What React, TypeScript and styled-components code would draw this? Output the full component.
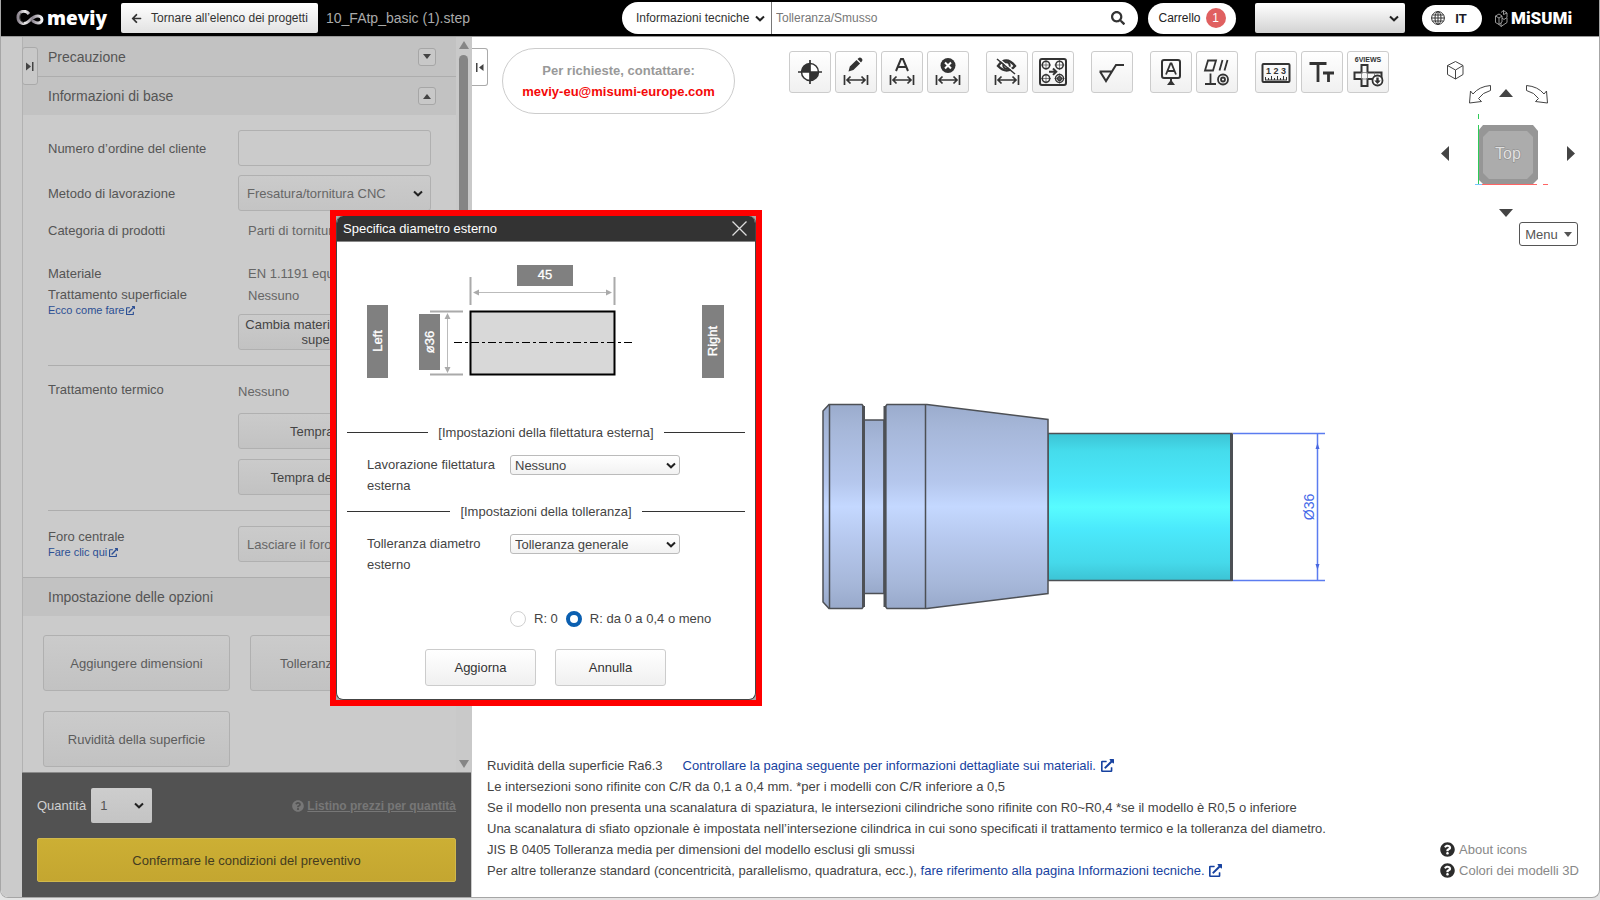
import React from 'react';
import styled, { createGlobalStyle, css } from 'styled-components';
import { FaQuestionCircle, FaSearch, FaArrowLeft, FaExternalLinkAlt } from 'react-icons/fa';

const GlobalStyle = createGlobalStyle`
  *, *::before, *::after { box-sizing: border-box; }
  body { margin: 0; background: #e4e4e4; }
  body, button, input, select {
    font-family: "Liberation Sans", Arial, sans-serif;
    font-size: 13px;
  }
  button { cursor: pointer; padding: 0; }
  a { text-decoration: none; }
`;

const chevron = `url("data:image/svg+xml,%3Csvg xmlns='http://www.w3.org/2000/svg' width='10' height='7'%3E%3Cpath d='M1 1.500L5 5.300 9 1.500' fill='none' stroke='%23222' stroke-width='2'/%3E%3C/svg%3E")`;

const Window = styled.div`
  position: relative;
  display: flex;
  flex-direction: column;
  height: calc(100vh - 2px);
  min-height: 860px;
  background: #fff;
  border: 1px solid #a6a6a6;
  border-top: 0;
  border-radius: 0 0 8px 8px;
  overflow: hidden;
`;

/* ---------- header ---------- */

const Header = styled.header`
  display: flex;
  align-items: center;
  flex: none;
  height: 37px;
  padding: 0 28px 0 15px;
  background: #000;
  border-bottom: 1px solid #999;
`;

const Brand = styled.a`
  display: flex;
  align-items: center;
  gap: 3px;
  width: 105px;
  color: #fff;
  font: 800 19px/28px "Open Sans", sans-serif;
  svg { flex: none; }
`;

const BackButton = styled.button`
  display: flex;
  align-items: center;
  justify-content: center;
  gap: 9px;
  width: 197px;
  height: 30px;
  border: 0;
  border-radius: 2px;
  background: linear-gradient(#fff, #e2e2e2);
  color: #333;
  font-size: 12px;
`;

const FileName = styled.span`
  margin-left: 8px;
  color: #aaa;
  font-size: 14px;
  white-space: nowrap;
`;

const SearchBar = styled.form`
  display: flex;
  align-items: center;
  width: 516px;
  height: 32px;
  margin-left: auto;
  padding: 0 13px 0 14px;
  border-radius: 16px;
  background: #fff;
`;

const SearchScope = styled.select`
  appearance: none;
  width: 136px;
  height: 32px;
  padding: 0;
  border: 0;
  border-right: 1px solid #777;
  background: ${chevron} no-repeat right 6px center;
  color: #333;
  font-size: 12px;
`;

const SearchInput = styled.input`
  flex: 1;
  min-width: 0;
  height: 28px;
  padding: 0 4px;
  border: 0;
  outline: 0;
  color: #333;
  font-size: 12px;
  &::placeholder { color: #777; opacity: 1; }
`;

const SearchButton = styled.button`
  display: flex;
  border: 0;
  background: none;
  color: #333;
  font-size: 14px;
`;

const CartButton = styled.button`
  display: flex;
  align-items: center;
  justify-content: center;
  gap: 5px;
  width: 88px;
  height: 31px;
  margin-left: 10px;
  border: 0;
  border-radius: 16px;
  background: #fff;
  color: #222;
  font-size: 12px;
`;

const CartCount = styled.span`
  width: 20px;
  height: 20px;
  border-radius: 10px;
  background: #e06060;
  color: #fff;
  line-height: 20px;
`;

const AccountSelect = styled.select`
  appearance: none;
  width: 150px;
  height: 30px;
  margin-left: 19px;
  padding: 0 4px;
  border: 0;
  border-radius: 2px;
  background: ${chevron} no-repeat right 6px center, linear-gradient(#fff, #d2d2d2);
`;

const LanguageButton = styled.button`
  display: flex;
  align-items: center;
  justify-content: center;
  gap: 10px;
  width: 60px;
  height: 27px;
  margin-left: 17px;
  padding-right: 6px;
  border: 0;
  border-radius: 14px;
  background: #fff;
  color: #1c1c28;
  font-weight: bold;
`;

const Misumi = styled.a`
  display: flex;
  align-items: center;
  gap: 3px;
  width: 76px;
  margin-left: 13px;
  color: #fff;
  font: 900 17px/24px "Roboto", sans-serif;
  svg { flex: none; }
`;

/* ---------- side panel ---------- */

const Body = styled.div`
  display: flex;
  flex: 1;
  min-height: 0;
`;

const Rail = styled.div`
  flex: none;
  width: 21px;
  background: #cbcbcb;
`;

const Panel = styled.aside`
  position: relative;
  display: flex;
  flex-direction: column;
  flex: none;
  width: 450px;
  background: #cbcbcb;
  color: #555;
`;

const edgeTab = css`
  display: flex;
  align-items: center;
  justify-content: center;
  width: 16px;
  height: 38px;
  border: 1px solid #aaa;
  color: #444;
`;

const PanelTab = styled.button`
  ${edgeTab}
  position: absolute;
  z-index: 1;
  top: 10px;
  left: 0;
  border-radius: 3px;
  background: #c8c8c8;
`;

const PanelScroll = styled.div`
  display: flex;
  flex: 1;
  min-height: 0;
  overflow: hidden;
  border-left: 1px solid #b2b2b2;
`;

const Sections = styled.div`
  flex: 1;
  min-width: 0;
`;

const ScrollTrack = styled.div`
  display: flex;
  flex-direction: column;
  align-items: center;
  gap: 6px;
  width: 16px;
  padding: 4px 1px 4px 0;
  background: #c9c9c9;
`;

const ScrollThumb = styled.div`
  width: 9px;
  height: 570px;
  border-radius: 5px;
  background: #858585;
`;

const ScrollArrow = styled.div<{ $down?: boolean }>`
  width: 0;
  height: 0;
  margin-top: ${p => (p.$down ? 'auto' : '0')};
  border: 5px solid transparent;
  border-top: ${p => (p.$down ? '8px solid #858585' : '0')};
  border-bottom: ${p => (p.$down ? '0' : '8px solid #858585')};
`;

const SectionHeader = styled.h2<{ $ruled?: boolean }>`
  display: flex;
  align-items: center;
  justify-content: space-between;
  height: 39px;
  margin: 0;
  padding: 0 20px 0 25px;
  border-top: ${p => (p.$ruled ? '1px solid #adadad' : '0')};
  background: #c2c2c2;
  font-size: 14px;
  font-weight: normal;
`;

const Toggle = styled.button`
  display: flex;
  align-items: center;
  justify-content: center;
  width: 18px;
  height: 18px;
  border: 1px solid #a6a6a6;
  border-radius: 3px;
  background: #c8c8c8;
  color: #444;
`;

const Fields = styled.div`
  padding: 15px 25px;
`;

const Field = styled.div<{ $gap?: number; $middle?: boolean }>`
  display: grid;
  grid-template-columns: 190px 1fr;
  align-items: ${p => (p.$middle ? 'center' : 'start')};
  margin-top: ${p => p.$gap ?? 0}px;
  line-height: 21px;
`;

const Rule = styled.hr`
  height: 1px;
  margin: 15px 0 0;
  border: 0;
  background: #adadad;
`;

const SmallLink = styled.a`
  display: flex;
  align-items: center;
  gap: 2px;
  color: #2c4f94;
  font-size: 11px;
  line-height: 11px;
`;

const Value = styled.div<{ $inset?: boolean }>`
  padding: ${p => (p.$inset ? '0 0 0 10px' : '2px 0 0')};
  color: #666;
  line-height: 22px;
`;

const Stack = styled.div<{ $gap: number }>`
  display: flex;
  flex-direction: column;
  gap: ${p => p.$gap}px;
`;

const panelControl = css`
  width: 100%;
  height: 36px;
  border: 1px solid #b0b0b0;
  border-radius: 3px;
`;

const TextInput = styled.input`
  ${panelControl}
  background: #cbcbcb;
`;

const PanelSelect = styled.select`
  ${panelControl}
  appearance: none;
  padding: 0 8px;
  background: ${chevron} no-repeat right 7px center, linear-gradient(#cbcbcb, #c4c4c4);
  color: #666;
`;

const PanelButton = styled.button`
  ${panelControl}
  background: linear-gradient(#cbcbcb, #c2c2c2);
  color: #444;
  line-height: 15px;
  white-space: nowrap;
`;

const Options = styled.div`
  display: grid;
  grid-template-columns: 187px 187px;
  gap: 20px;
  padding: 19px 20px;
`;

const OptionButton = styled(PanelButton)`
  height: 56px;
  color: #5c5c5c;
`;

const PanelFooter = styled.footer`
  flex: none;
  margin-right: 1px;
  padding: 15px;
  border-top: 1px solid #8a8a8a;
  background: #525252;
`;

const QuantityRow = styled.div`
  display: flex;
  align-items: center;
  margin-bottom: 15px;
  color: #d0d0d0;
`;

const QuantitySelect = styled.select`
  appearance: none;
  width: 61px;
  height: 35px;
  margin-left: 5px;
  padding: 0 9px;
  border: 0;
  border-radius: 2px;
  background: ${chevron} no-repeat right 8px center, linear-gradient(#cdcdcd, #c4c4c4);
  color: #555;
`;

const PriceLink = styled.a`
  display: flex;
  align-items: center;
  gap: 3px;
  margin-left: auto;
  color: #777;
  font-size: 12px;
  font-weight: bold;
  span { text-decoration: underline; }
`;

const ConfirmButton = styled.button`
  width: 100%;
  height: 44px;
  border: 1px solid #d0b84c;
  border-radius: 2px;
  background: linear-gradient(#ccaf34, #c4a630);
  color: #443c20;
`;

/* ---------- viewer ---------- */

const Viewer = styled.main`
  display: flex;
  flex: 1;
  flex-direction: column;
  min-width: 0;
`;

const ViewerTop = styled.div`
  display: flex;
  align-items: flex-start;
  padding: 11px 21px 0 0;
`;

const ViewerTab = styled.button`
  ${edgeTab}
  border-left: 0;
  border-radius: 0 3px 3px 0;
  background: #fff;
`;

const Contact = styled.div`
  width: 233px;
  height: 66px;
  margin-left: 14px;
  padding-top: 11px;
  border: 1px solid #ccc;
  border-radius: 33px;
  color: #999;
  font-weight: bold;
  line-height: 21px;
  text-align: center;
  a { color: #f40808; }
`;

const Toolbar = styled.div`
  display: flex;
  gap: 17px;
  margin: 3px 0 0 54px;
`;

const ToolGroup = styled.div`
  display: flex;
  gap: 4px;
`;

const ToolButton = styled.button`
  width: 42px;
  height: 42px;
  border: 1px solid #ccc;
  border-radius: 3px;
  background: linear-gradient(#fff, #f0f0f0);
  svg { display: block; margin: -1px; }
`;

const Navigator = styled.div`
  display: flex;
  flex-direction: column;
  align-items: flex-end;
  margin-left: auto;
`;

const MenuButton = styled.button`
  display: flex;
  align-items: center;
  justify-content: center;
  gap: 6px;
  width: 59px;
  height: 24px;
  border: 1px solid #555;
  border-radius: 3px;
  background: #fff;
  color: #555;
`;

const Canvas = styled.div`
  display: flex;
  flex: 1;
  align-items: center;
  justify-content: center;
  min-height: 0;
  padding: 12px 0 0 77px;
`;

const ViewerFooter = styled.footer`
  display: flex;
  align-items: flex-end;
  justify-content: space-between;
  padding: 0 20px 16px 15px;
  line-height: 21px;
`;

const Notes = styled.div`
  color: #444;
  p { margin: 0; }
`;

const NoteLink = styled.a<{ $apart?: boolean }>`
  margin-left: ${p => (p.$apart ? '20px' : '0')};
  color: #1742a0;
  svg { margin-left: 1px; vertical-align: -2px; }
`;

const HelpLinks = styled.nav`
  display: flex;
  flex-direction: column;
  a { display: flex; align-items: center; gap: 4px; color: #888; }
  svg { color: #2c2c2c; }
`;

/* ---------- dialog ---------- */

const DialogFrame = styled.div`
  position: absolute;
  z-index: 2;
  top: 210px;
  left: 329px;
  width: 432px;
  border: 6px solid #f00;
  background: #a8a8a8;
`;

const Dialog = styled.section`
  border: 1px solid #444;
  border-top: 0;
  border-radius: 7px;
  background: #fff;
  color: #444;
  overflow: hidden;
`;

const DialogTitle = styled.h1`
  display: flex;
  align-items: center;
  justify-content: space-between;
  height: 26px;
  margin: 0;
  padding: 0 8px 0 6px;
  border-bottom: 1px solid #888;
  background: #333;
  color: #fff;
  font-size: 13px;
  font-weight: normal;
`;

const CloseButton = styled.button`
  display: flex;
  border: 0;
  background: none;
`;

const DialogBody = styled.form`
  padding: 13px 10px 13px;
  line-height: 21px;
`;

const Drawing = styled.svg`
  display: block;
  width: 100%;
  height: 166px;
`;

const Divider = styled.div`
  display: flex;
  align-items: center;
  gap: 10px;
  height: 22px;
  white-space: nowrap;
  &::before, &::after { content: ""; flex: 1; height: 1px; background: #333; }
`;

const DialogField = styled.div`
  display: grid;
  grid-template-columns: 130px 170px;
  column-gap: 13px;
  align-items: start;
  padding: 11px 20px 4px;
`;

const DialogSelect = styled.select`
  appearance: none;
  height: 20px;
  margin-top: 1px;
  padding: 0 4px;
  border: 1px solid #bbb;
  border-radius: 3px;
  background: ${chevron} no-repeat right 3px center, linear-gradient(#fff, #f2f2f2);
  color: #444;
`;

const Radios = styled.div`
  display: flex;
  gap: 8px;
  padding: 29px 0 20px 163px;
  label { display: flex; align-items: center; gap: 8px; }
`;

const Radio = styled.input`
  appearance: none;
  width: 16px;
  height: 16px;
  margin: 0;
  border: 1px solid #d0d0d0;
  border-radius: 50%;
  background: #fff;
  &:checked { border: 4px solid #0b5fb0; }
`;

const Actions = styled.div`
  display: flex;
  justify-content: center;
  gap: 19px;
  padding-right: 1px;
`;

const ActionButton = styled.button`
  width: 111px;
  height: 37px;
  border: 1px solid #ccc;
  border-radius: 3px;
  background: linear-gradient(#fff, #f0f0f0);
  color: #333;
`;

/* ---------- icons ---------- */

const Caret = ({ up }: { up?: boolean }) => (
  <svg width="8" height="5"><path d={up ? 'M0 5H8L4 0Z' : 'M0 0H8L4 5Z'} fill="currentColor" /></svg>
);

const EdgeArrow = ({ left }: { left?: boolean }) => (
  <svg width="8" height="9">
    {left
      ? <path d="M0 0h1.500v9H0zM7.500 1v7L3 4.500z" fill="currentColor" />
      : <path d="M6 0h1.500v9H6zM0 0.500v8L5 4.500z" fill="currentColor" />}
  </svg>
);

const MeviyMark = () => (
  <svg width="28" height="16" viewBox="0 0 28 16" fill="none">
    <defs>
      <linearGradient id="mark" x1="0" x2="1">
        <stop offset="0" stopColor="#8d8690" /><stop offset=".3" stopColor="#eee" />
        <stop offset=".6" stopColor="#8b8490" /><stop offset="1" stopColor="#f4f4f4" />
      </linearGradient>
    </defs>
    <path d="M13 4C10 0 2 0 2 7.500C2 14 9 15 13 11C17 7 19 6 22 6C27 6 27.500 13 22 13C19 13 18 11.500 16 10.500" stroke="url(#mark)" strokeWidth="3" />
    <path d="M5 3C2.500 7 4 12 8 13" stroke="#555" strokeWidth="1" />
  </svg>
);

const Globe = () => (
  <svg width="14" height="14" viewBox="0 0 14 14" fill="none" stroke="#333">
    <circle cx="7" cy="7" r="6.400" /><ellipse cx="7" cy="7" rx="3" ry="6.400" />
    <path d="M7 .6v12.800M.6 7h12.800M1.500 4h11M1.500 10h11" />
  </svg>
);

const MisumiMark = () => (
  <svg width="13" height="17" viewBox="0 0 13 17" fill="none" stroke="#bbb" strokeWidth=".8">
    <path d="M.5 6L4 4l3 2v6l-3 2.500L.5 12.500zM.5 6L4 8l3-2M4 8v6.500M6 2.500L8.500.5 12 3v4.500L9 9.500 7 8M8.500.5v4L12 3M4 14.500l2 2 6-4V8M6 16.500V13" />
  </svg>
);

const DimArrow = () => (
  <g fill="none" stroke="#333" strokeWidth="1.700">
    <path d="M9.500 24v10M32.500 24v10M12 29h18M15.500 25.500L12 29l3.500 3.500M26.500 25.500L30 29l-3.500 3.500" />
  </g>
);

const icons: Record<string, React.ReactNode> = {
  Origine: (
    <>
      <circle cx="21" cy="21" r="8.500" fill="#fff" stroke="#333" strokeWidth="1.500" />
      <path d="M21 21V12.500A8.500 8.500 0 0 0 12.500 21zM21 21v8.500A8.500 8.500 0 0 0 29.500 21z" fill="#333" />
      <path d="M21 9v24M9 21h24" stroke="#333" strokeWidth="1.700" />
    </>
  ),
  'Modifica quota': (
    <>
      <path d="M13.500 20.500l1.300-5L21.500 9l3.600 3.600-6.700 6.500zM22.500 8l1.600-1.300q1.200-.6 2.200.4l.8.900q.8 1 0 2L26 11.600z" fill="#333" />
      <DimArrow />
    </>
  ),
  'Quota automatica': (<><path d="M15 20L20 8h2l5 12M17 16h8" fill="none" stroke="#333" strokeWidth="2" /><DimArrow /></>),
  'Elimina quota': (
    <>
      <circle cx="21" cy="14.500" r="7.500" fill="#333" />
      <path d="M18 11.500l6 6M24 11.500l-6 6" stroke="#fff" strokeWidth="2" /><DimArrow />
    </>
  ),
  'Nascondi quota': (
    <>
      <path d="M12 15q8-11 17 0-8 9-17 0z" fill="none" stroke="#333" strokeWidth="2.400" />
      <circle cx="20.500" cy="14.500" r="3.200" fill="none" stroke="#333" strokeWidth="2" />
      <path d="M12 7l18 15" stroke="#fff" strokeWidth="1.500" /><path d="M11 8l18 15" stroke="#333" strokeWidth="1.500" />
      <DimArrow />
    </>
  ),
  'Copia fori': (
    <g fill="none" stroke="#333" strokeWidth="1.500">
      <rect x="8" y="8" width="26" height="26" rx="2" strokeWidth="2" />
      <circle cx="14" cy="14" r="3.700" /><circle cx="27.500" cy="14" r="3.700" />
      <circle cx="14" cy="27.500" r="3.700" /><circle cx="27.500" cy="27.500" r="4" /><circle cx="27.500" cy="27.500" r="1.800" />
      <path d="M9 14h10M14 9v10M22.500 14h10M27.500 9v10M9 27.500h10M14 22.500v10M22.500 27.500h10M27.500 22.500v10" strokeWidth=".6" />
      <path d="M17 20.700h7M21 17.500l3.300 3.200-3.300 3.200" strokeWidth="2" />
    </g>
  ),
  Rugosità: (<path d="M8.500 20.500H21M9 20.500l6 9.500L25 14h8" fill="none" stroke="#333" strokeWidth="2" />),
  Riferimento: (
    <>
      <rect x="12" y="9" width="18" height="18" rx="2" fill="none" stroke="#333" strokeWidth="2" />
      <path d="M16 23.500l4.500-11h1l4.500 11M17.500 20h7" fill="none" stroke="#333" strokeWidth="1.800" />
      <path d="M20 27h2v3l3 4h-8l3-4z" fill="#333" />
    </>
  ),
  'Tolleranza di forma': (
    <g fill="none" stroke="#333" strokeWidth="1.800">
      <path d="M9 19.500l3-10h8l-3 10zM23.500 19.500l3-10.500M28.500 19.500l3-10.500M14.500 22.500v11M9 33h11" />
      <circle cx="27" cy="28.500" r="5" /><circle cx="27" cy="28.500" r="2" />
    </g>
  ),
  Misura: (
    <>
      <rect x="7.500" y="13" width="27" height="18" rx="1" fill="none" stroke="#333" strokeWidth="2" />
      <text x="21" y="23" textAnchor="middle" fontSize="9" fontWeight="bold" fill="#333">1 2 3</text>
      <path d="M10.500 26v3M13.500 27v2M16.500 25v4M19.500 27v2M22.500 25v4M25.500 27v2M28.500 25v4M31.500 26v3M10 29h22" stroke="#333" fill="none" />
    </>
  ),
  Testo: (<path d="M8.500 12.500h17M17 12.500V31M22 22h11M27.500 22v9" fill="none" stroke="#333" strokeWidth="2.800" />),
  'Sei viste': (
    <>
      <text x="21" y="11" textAnchor="middle" fontSize="7" fontWeight="bold" fill="#333">6VIEWS</text>
      <path d="M14.500 14h6v7.500h14V28h-14v7h-6v-7h-7v-6.500h7z" fill="none" stroke="#333" strokeWidth="2" />
      <path d="M14.500 21.500h6v6.500h-6zM27.500 21.500v6" fill="none" stroke="#777" strokeWidth=".8" />
      <circle cx="30.500" cy="29.500" r="5" fill="#fff" stroke="#333" strokeWidth="1.800" />
      <path d="M29.300 26.500h2.400v3h2l-3.200 3.500-3.200-3.500h2z" fill="#333" />
    </>
  ),
};

const toolGroups = [
  ['Origine', 'Modifica quota', 'Quota automatica', 'Elimina quota'],
  ['Nascondi quota', 'Copia fori'],
  ['Rugosità'],
  ['Riferimento', 'Tolleranza di forma'],
  ['Misura', 'Testo', 'Sei viste'],
];

const ViewCube = () => (
  <svg width="142" height="174" viewBox="0 0 142 174">
    <g fill="#fff" stroke="#444" strokeWidth="1">
      <path d="M11.500 17.500l8-4 7.500 4v9l-7.500 4.500-8-4.500zM11.500 17.500l8 4.500 7.500-4.500M19.500 22v9" />
      <path d="M54.500 37.500v5q-8 2-12 8l3 3-12 1.500 1-12 2.500 3q6-7.500 17.500-8.500z" />
      <path d="M90.500 37.500v5q8 2 12 8l-3 3 12 1.500-1-12-2.500 3q-6-7.500-17.500-8.500z" />
    </g>
    <path d="M63 49h14l-7-8zM63 161h14l-7 8zM13 98v15l-8-7.500zM131 98v15l8-7.500z" fill="#444" />
    <path d="M47 77h50l5 6v48l-5 5H47l-5-5V83z" fill="#969696" />
    <path d="M53 83h38l6 6v36l-6 6H53l-6-6V89z" fill="#acacac" />
    <text x="72" y="111" textAnchor="middle" fontSize="16" fill="#e0e0e0" stroke="#888" strokeWidth="1" paintOrder="stroke">Top</text>
    <path d="M42.500 66v5M42.500 77v59" stroke="#2ecc57" />
    <path d="M46 136.500h55M107 136.500h5" stroke="#ff6464" />
    <path d="M39 136.500h7" stroke="#7ac4ff" />
  </svg>
);

const PartModel = () => (
  <svg width="506" height="208" viewBox="821 403 506 208">
    <defs>
      <linearGradient id="steel" x2="0" y2="1">
        <stop offset="0" stopColor="#9baccd" /><stop offset=".12" stopColor="#a6b7d9" />
        <stop offset=".38" stopColor="#b5c7ed" /><stop offset=".5" stopColor="#c4d8ff" />
        <stop offset=".64" stopColor="#b8caf0" /><stop offset=".88" stopColor="#a6b7d9" /><stop offset="1" stopColor="#98a9ca" />
      </linearGradient>
      <linearGradient id="selected" x2="0" y2="1">
        <stop offset="0" stopColor="#3cc3d4" /><stop offset=".12" stopColor="#45dcec" />
        <stop offset=".36" stopColor="#4be9fc" /><stop offset=".5" stopColor="#58fcff" />
        <stop offset=".65" stopColor="#4be9fc" /><stop offset=".88" stopColor="#45d9ea" /><stop offset="1" stopColor="#3cc3d4" />
      </linearGradient>
    </defs>
    <g stroke="#4d5055" strokeWidth="1.500">
      <path d="M1048 433.500h184v147h-184z" fill="url(#selected)" />
      <path d="M863 420h21v173.500h-21z" fill="url(#steel)" />
      <path d="M829 404.500h33l1.500 2v200l-1.500 2h-33l-6-6.500V411z" fill="url(#steel)" />
      <path d="M887 404.500h40l121 15v174l-121 15h-40l-1.500-2v-200z" fill="url(#steel)" />
      <path d="M829.500 404v205M925.500 404v205" fill="none" />
      <path d="M863.500 406v201M885 406v201M1231.500 434v147" strokeWidth="3" />
    </g>
    <path d="M1233 433.500h92M1233 580.500h92M1317.500 433v147" stroke="#5b7cf0" strokeWidth="1.500" />
    <path d="M1315.500 449h4l-2-6zM1315.500 564h4l-2 6z" fill="#4a68e0" />
    <text transform="translate(1314 507) rotate(-90)" textAnchor="middle" fontSize="14" fill="#4468e8">Ø36</text>
  </svg>
);

const DiameterDrawing = () => (
  <Drawing viewBox="347 256 398 166">
    <path d="M470.500 278v28M614.500 278v28M430 312.500h33M430 375.500h33" stroke="#aaa" strokeWidth="2" />
    <path d="M475 293.500h135M447.500 318v54" stroke="#bbb" />
    <path d="M473 293.500l6-3v6zM612 293.500l-6-3v6zM447.500 314l-3 6h6zM447.500 374l-3-6h6z" fill="#aaa" />
    <rect x="470.500" y="312.500" width="144" height="63" fill="#d8d8d8" stroke="#000" strokeWidth="2" />
    <path d="M454 343.500h178" stroke="#000" strokeDasharray="8 3 3 3" />
    <g fill="#808080">
      <rect x="517" y="266" width="56" height="21" /><rect x="367" y="306" width="21" height="73" />
      <rect x="419" y="315" width="21" height="56" /><rect x="702" y="306" width="22" height="73" />
    </g>
    <g fill="#fff" stroke="#fff" strokeWidth=".3" fontSize="13" textAnchor="middle">
      <text x="545" y="280">45</text>
      <text transform="translate(382 342) rotate(-90)">Left</text>
      <text transform="translate(434 343) rotate(-90)">ø36</text>
      <text transform="translate(717 342) rotate(-90)">Right</text>
    </g>
  </Drawing>
);

export default function App() {
  return (
    <Window>
      <GlobalStyle />
      <Header>
        <Brand href="#"><MeviyMark />meviy</Brand>
        <BackButton><FaArrowLeft size={11} />Tornare all’elenco dei progetti</BackButton>
        <FileName>10_FAtp_basic (1).step</FileName>
        <SearchBar>
          <SearchScope aria-label="Ambito di ricerca"><option>Informazioni tecniche</option></SearchScope>
          <SearchInput aria-label="Cerca" placeholder="Tolleranza/Smusso" />
          <SearchButton type="button" aria-label="Cerca"><FaSearch /></SearchButton>
        </SearchBar>
        <CartButton>Carrello<CartCount>1</CartCount></CartButton>
        <AccountSelect aria-label="Account"><option /></AccountSelect>
        <LanguageButton><Globe />IT</LanguageButton>
        <Misumi href="#"><MisumiMark />MiSUMi</Misumi>
      </Header>

      <Body>
        <Rail />
        <Panel>
          <PanelTab aria-label="Espandi pannello"><EdgeArrow /></PanelTab>
          <PanelScroll>
            <Sections>
              <SectionHeader>Precauzione<Toggle aria-label="Apri"><Caret /></Toggle></SectionHeader>
              <SectionHeader $ruled>Informazioni di base<Toggle aria-label="Chiudi"><Caret up /></Toggle></SectionHeader>
              <Fields>
                <Field $middle>
                  <label htmlFor="order">Numero d’ordine del cliente</label>
                  <TextInput id="order" />
                </Field>
                <Field $gap={9} $middle>
                  <label htmlFor="method">Metodo di lavorazione</label>
                  <PanelSelect id="method"><option>Fresatura/tornitura CNC</option></PanelSelect>
                </Field>
                <Field $gap={9}>
                  <span>Categoria di prodotti</span>
                  <Value $inset>Parti di tornitura</Value>
                </Field>
                <Field $gap={21}>
                  <div>
                    Materiale<br />Trattamento superficiale
                    <SmallLink href="#">Ecco come fare<FaExternalLinkAlt size={9} /></SmallLink>
                  </div>
                  <Stack $gap={7}>
                    <Value $inset>EN 1.1191 equ.<br />Nessuno</Value>
                    <PanelButton>Cambia materiale / trattamento<br />superficiale</PanelButton>
                  </Stack>
                </Field>
                <Rule />
                <Field $gap={13}>
                  <span>Trattamento termico</span>
                  <Stack $gap={10}>
                    <Value>Nessuno</Value>
                    <PanelButton>Tempra globale</PanelButton>
                    <PanelButton>Tempra della porzione</PanelButton>
                  </Stack>
                </Field>
                <Rule />
                <Field $gap={15}>
                  <div>
                    <label htmlFor="hole">Foro centrale</label>
                    <SmallLink href="#">Fare clic qui<FaExternalLinkAlt size={9} /></SmallLink>
                  </div>
                  <PanelSelect id="hole"><option>Lasciare il foro</option></PanelSelect>
                </Field>
              </Fields>
              <SectionHeader $ruled>Impostazione delle opzioni</SectionHeader>
              <Options>
                <OptionButton>Aggiungere dimensioni</OptionButton>
                <OptionButton>Tolleranza geometrica</OptionButton>
                <OptionButton>Ruvidità della superficie</OptionButton>
              </Options>
            </Sections>
            <ScrollTrack><ScrollArrow /><ScrollThumb /><ScrollArrow $down /></ScrollTrack>
          </PanelScroll>
          <PanelFooter>
            <QuantityRow>
              <label htmlFor="quantity">Quantità</label>
              <QuantitySelect id="quantity"><option>1</option></QuantitySelect>
              <PriceLink href="#"><FaQuestionCircle size={12} /><span>Listino prezzi per quantità</span></PriceLink>
            </QuantityRow>
            <ConfirmButton>Confermare le condizioni del preventivo</ConfirmButton>
          </PanelFooter>
        </Panel>

        <Viewer>
          <ViewerTop>
            <ViewerTab aria-label="Comprimi pannello"><EdgeArrow left /></ViewerTab>
            <Contact>Per richieste, contattare:<br /><a href="mailto:meviy-eu@misumi-europe.com">meviy-eu@misumi-europe.com</a></Contact>
            <Toolbar>
              {toolGroups.map(group => (
                <ToolGroup key={group[0]}>
                  {group.map(name => (
                    <ToolButton key={name} aria-label={name}>
                      <svg width="42" height="42" viewBox="0 0 42 42">{icons[name]}</svg>
                    </ToolButton>
                  ))}
                </ToolGroup>
              ))}
            </Toolbar>
            <Navigator>
              <ViewCube />
              <MenuButton>Menu<Caret /></MenuButton>
            </Navigator>
          </ViewerTop>
          <Canvas><PartModel /></Canvas>
          <ViewerFooter>
            <Notes>
              <p>
                Ruvidità della superficie Ra6.3
                <NoteLink $apart href="#">Controllare la pagina seguente per informazioni dettagliate sui materiali. <FaExternalLinkAlt /></NoteLink>
              </p>
              <p>Le intersezioni sono rifinite con C/R da 0,1 a 0,4 mm. *per i modelli con C/R inferiore a 0,5</p>
              <p>Se il modello non presenta una scanalatura di spaziatura, le intersezioni cilindriche sono rifinite con R0~R0,4 *se il modello è R0,5 o inferiore</p>
              <p>Una scanalatura di sfiato opzionale è impostata nell’intersezione cilindrica in cui sono specificati il trattamento termico e la tolleranza del diametro.</p>
              <p>JIS B 0405 Tolleranza media per dimensioni del modello esclusi gli smussi</p>
              <p>
                Per altre tolleranze standard (concentricità, parallelismo, quadratura, ecc.),{' '}
                <NoteLink href="#">fare riferimento alla pagina Informazioni tecniche. <FaExternalLinkAlt /></NoteLink>
              </p>
            </Notes>
            <HelpLinks>
              <a href="#"><FaQuestionCircle size={15} />About icons</a>
              <a href="#"><FaQuestionCircle size={15} />Colori dei modelli 3D</a>
            </HelpLinks>
          </ViewerFooter>
        </Viewer>
      </Body>

      <DialogFrame>
        <Dialog role="dialog" aria-labelledby="dialog-title">
          <DialogTitle>
            <span id="dialog-title">Specifica diametro esterno</span>
            <CloseButton aria-label="Chiudi">
              <svg width="15" height="15"><path d="M.5.5l14 14M14.500.5l-14 14" stroke="#ddd" strokeWidth="1.300" /></svg>
            </CloseButton>
          </DialogTitle>
          <DialogBody>
            <DiameterDrawing />
            <Divider>[Impostazioni della filettatura esterna]</Divider>
            <DialogField>
              <label htmlFor="thread">Lavorazione filettatura esterna</label>
              <DialogSelect id="thread"><option>Nessuno</option></DialogSelect>
            </DialogField>
            <Divider>[Impostazioni della tolleranza]</Divider>
            <DialogField>
              <label htmlFor="tolerance">Tolleranza diametro esterno</label>
              <DialogSelect id="tolerance"><option>Tolleranza generale</option></DialogSelect>
            </DialogField>
            <Radios>
              <label><Radio type="radio" name="radius" />R: 0</label>
              <label><Radio type="radio" name="radius" defaultChecked />R: da 0 a 0,4 o meno</label>
            </Radios>
            <Actions>
              <ActionButton type="button">Aggiorna</ActionButton>
              <ActionButton type="button">Annulla</ActionButton>
            </Actions>
          </DialogBody>
        </Dialog>
      </DialogFrame>
    </Window>
  );
}
